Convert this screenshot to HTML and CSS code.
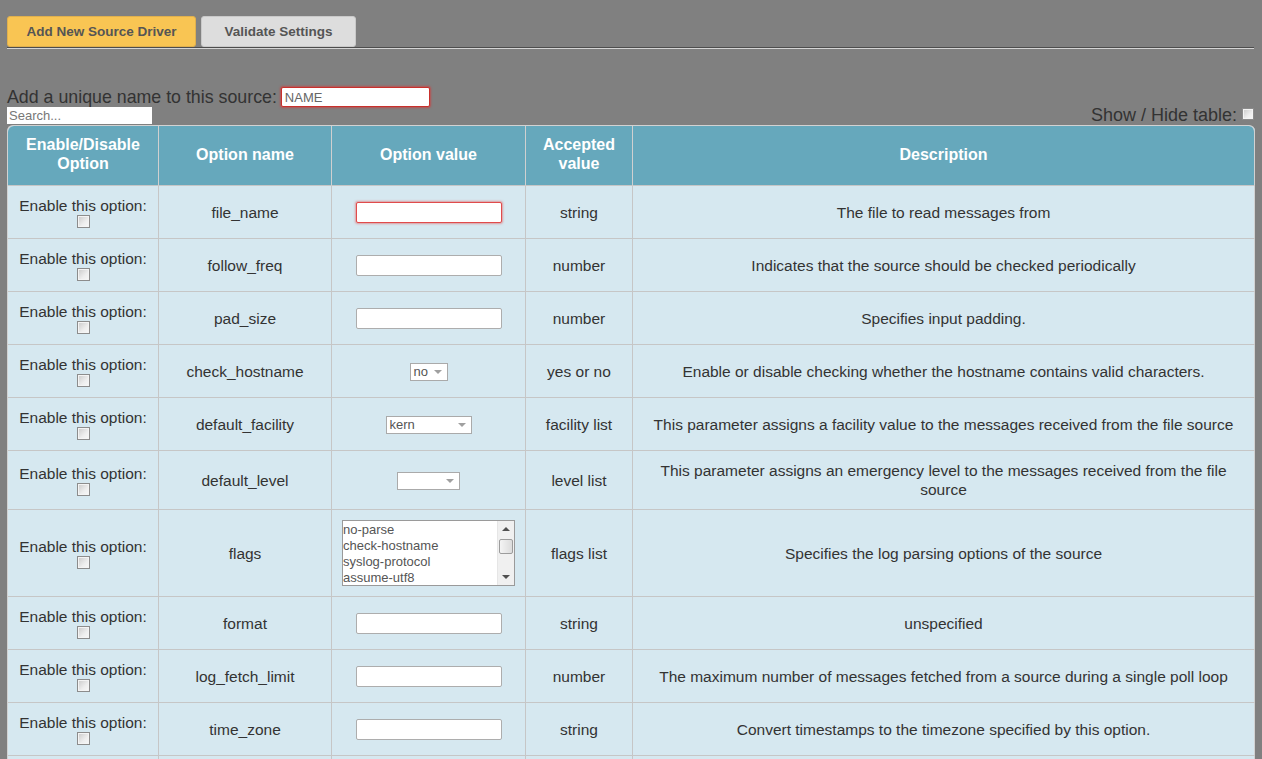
FILE: index.html
```html
<!DOCTYPE html>
<html>
<head>
<meta charset="utf-8">
<title>Source Driver</title>
<link rel="stylesheet" href="styles.css">
</head>
<body>
<div class="tabs">
  <button class="btn btn-primary">Add New Source Driver</button>
  <button class="btn btn-secondary">Validate Settings</button>
</div>
<div class="rule"></div>

<div class="name-row">
  <label class="name-label">Add a unique name to this source:</label>
  <input class="name-input" type="text" value="NAME">
</div>
<div class="tools-row">
  <input class="search" type="text" placeholder="Search...">
  <label class="toggle">Show / Hide table: <input class="chk chk-small" type="checkbox"></label>
</div>

<table class="opts">
  <colgroup>
    <col class="c1"><col class="c2"><col class="c3"><col class="c4"><col class="c5">
  </colgroup>
  <thead>
    <tr>
      <th>Enable/Disable<br>Option</th>
      <th>Option name</th>
      <th>Option value</th>
      <th>Accepted<br>value</th>
      <th>Description</th>
    </tr>
  </thead>
  <tbody>
    <tr>
      <td class="en">Enable this option:<input class="chk" type="checkbox"></td>
      <td>file_name</td>
      <td><input class="txt txt-invalid" type="text"></td>
      <td>string</td>
      <td>The file to read messages from</td>
    </tr>
    <tr>
      <td class="en">Enable this option:<input class="chk" type="checkbox"></td>
      <td>follow_freq</td>
      <td><input class="txt" type="text"></td>
      <td>number</td>
      <td>Indicates that the source should be checked periodically</td>
    </tr>
    <tr>
      <td class="en">Enable this option:<input class="chk" type="checkbox"></td>
      <td>pad_size</td>
      <td><input class="txt" type="text"></td>
      <td>number</td>
      <td>Specifies input padding.</td>
    </tr>
    <tr>
      <td class="en">Enable this option:<input class="chk" type="checkbox"></td>
      <td>check_hostname</td>
      <td><span class="sel sel-yn">no</span></td>
      <td>yes or no</td>
      <td>Enable or disable checking whether the hostname contains valid characters.</td>
    </tr>
    <tr>
      <td class="en">Enable this option:<input class="chk" type="checkbox"></td>
      <td>default_facility</td>
      <td><span class="sel sel-fac">kern</span></td>
      <td>facility list</td>
      <td>This parameter assigns a facility value to the messages received from the file source</td>
    </tr>
    <tr>
      <td class="en">Enable this option:<input class="chk" type="checkbox"></td>
      <td>default_level</td>
      <td><span class="sel sel-lvl"></span></td>
      <td>level list</td>
      <td>This parameter assigns an emergency level to the messages received from the file source</td>
    </tr>
    <tr>
      <td class="en">Enable this option:<input class="chk" type="checkbox"></td>
      <td>flags</td>
      <td>
        <div class="listbox">
          <div class="items">
            <div>no-parse</div>
            <div>check-hostname</div>
            <div>syslog-protocol</div>
            <div>assume-utf8</div>
          </div>
          <div class="sbar">
            <span class="arr arr-up"></span>
            <span class="thumb"></span>
            <span class="arr arr-down"></span>
          </div>
        </div>
      </td>
      <td>flags list</td>
      <td>Specifies the log parsing options of the source</td>
    </tr>
    <tr>
      <td class="en">Enable this option:<input class="chk" type="checkbox"></td>
      <td>format</td>
      <td><input class="txt" type="text"></td>
      <td>string</td>
      <td>unspecified</td>
    </tr>
    <tr>
      <td class="en">Enable this option:<input class="chk" type="checkbox"></td>
      <td>log_fetch_limit</td>
      <td><input class="txt" type="text"></td>
      <td>number</td>
      <td>The maximum number of messages fetched from a source during a single poll loop</td>
    </tr>
    <tr>
      <td class="en">Enable this option:<input class="chk" type="checkbox"></td>
      <td>time_zone</td>
      <td><input class="txt" type="text"></td>
      <td>string</td>
      <td>Convert timestamps to the timezone specified by this option.</td>
    </tr>
    <tr class="tail">
      <td></td>
      <td></td>
      <td></td>
      <td></td>
      <td></td>
    </tr>
  </tbody>
</table>
</body>
</html>
```

FILE: styles.css
```css
html, body {
  margin: 0;
  background: #808080;
}
body {
  padding: 16px 8px 0 7px;
  font-family: "Liberation Sans", Arial, sans-serif;
  font-size: 16px;
  color: #333;
}

.tabs {
  display: flex;
  gap: 5px;
}
.btn {
  height: 31px;
  padding: 0 10px;
  font-family: "Liberation Sans", Arial, sans-serif;
  font-size: 13.5px;
  font-weight: bold;
  color: #555;
  border-radius: 3px;
  cursor: pointer;
}
.btn-primary {
  width: 189px;
  background: #f9c553;
  border: 1px solid #e0b04e;
}
.btn-secondary {
  width: 155px;
  background: #dddddd;
  border: 1px solid #c9c9c9;
}
.rule {
  height: 0;
  border-top: 1px solid #4d4d4d;
  border-bottom: 1px solid #d4d4d4;
}

.name-row {
  display: flex;
  align-items: center;
  margin-top: 38px;
  height: 20px;
}
.name-label {
  font-size: 17.8px;
  color: #333;
}
.name-input {
  box-sizing: border-box;
  width: 149px;
  height: 20px;
  margin-left: 4px;
  padding: 0 3px;
  border: 1px solid #c9302c;
  border-radius: 2px;
  box-shadow: 0 0 2px 1px rgba(220, 50, 50, 0.6);
  background: #fff;
  font-family: "Liberation Sans", Arial, sans-serif;
  font-size: 13px;
  color: #666;
  outline: none;
}

.tools-row {
  display: flex;
  justify-content: space-between;
  align-items: flex-end;
  height: 18px;
}
.search {
  box-sizing: border-box;
  width: 145px;
  height: 17px;
  margin-bottom: 1px;
  border: 0;
  padding: 0 2px;
  background: #fff;
  font-family: "Liberation Sans", Arial, sans-serif;
  font-size: 13px;
  color: #333;
  outline: none;
}
.search::placeholder {
  color: #777;
}
.toggle {
  display: flex;
  align-items: center;
  gap: 5px;
  font-size: 18px;
  color: #333;
  line-height: 18px;
  margin-bottom: 1px;
}

.chk {
  -webkit-appearance: none;
  appearance: none;
  box-sizing: border-box;
  display: block;
  width: 13px;
  height: 13px;
  margin: 0 auto;
  border: 1px solid #8c8c8c;
  background: linear-gradient(135deg, #c9c9c9 0%, #eeeeee 60%, #f8f8f8 100%);
  box-shadow: inset 0 0 0 1px #f4f4f4;
}
.chk-small {
  width: 12px;
  height: 12px;
  margin: 0 0 2px 0;
}

.opts {
  width: 1247px;
  table-layout: fixed;
  border-collapse: separate;
  border-spacing: 0;
  border-top: 1px solid #d2d2d2;
  border-left: 1px solid #d2d2d2;
  border-radius: 6px 6px 0 0;
  background: #d6e8f0;
}
.c1 { width: 151px; }
.c2 { width: 173px; }
.c3 { width: 194px; }
.c4 { width: 107px; }
.c5 { width: 622px; }

.opts th,
.opts td {
  padding: 10px 4px;
  border-right: 1px solid #c6c6c6;
  border-bottom: 1px solid #c6c6c6;
  text-align: center;
  vertical-align: middle;
  line-height: 19px;
}
.opts th {
  padding-top: 9px;
  padding-bottom: 12px;
  background: #66a8bc;
  color: #fff;
  font-size: 16px;
  font-weight: bold;
  border-right-color: #d0d0d0;
}
.opts th:first-child {
  border-top-left-radius: 6px;
}
.opts th:last-child {
  border-top-right-radius: 6px;
  border-right-color: #d2d2d2;
}
.opts td {
  color: #333;
  font-size: 15.5px;
}
.opts td:last-child {
  border-right-color: #d2d2d2;
}
.opts .tail td {
  height: 40px;
}

.txt {
  box-sizing: border-box;
  display: inline-block;
  vertical-align: middle;
  width: 146px;
  height: 21px;
  border: 1px solid #adadad;
  border-radius: 2px;
  background: #fff;
  outline: none;
  padding: 0 3px;
}
.txt-invalid {
  border-color: #e04b4b;
  box-shadow: 0 0 2px 1px rgba(230, 80, 80, 0.5);
}

.sel {
  box-sizing: border-box;
  position: relative;
  display: inline-block;
  vertical-align: middle;
  height: 18px;
  padding: 0 0 0 3px;
  border: 1px solid #aaaaaa;
  background: #fff;
  font-size: 13px;
  line-height: 16px;
  color: #555;
  text-align: left;
}
.sel::after {
  content: "";
  position: absolute;
  right: 5px;
  top: 6px;
  border-left: 4px solid transparent;
  border-right: 4px solid transparent;
  border-top: 4px solid #a0a0a0;
}
.sel-yn { width: 38px; }
.sel-fac { width: 86px; }
.sel-lvl { width: 63px; }

.listbox {
  box-sizing: border-box;
  display: inline-flex;
  vertical-align: top;
  width: 173px;
  height: 66px;
  border: 1px solid #9a9a9a;
  background: #fff;
  text-align: left;
}
.items {
  flex: 1;
  padding-top: 1px;
  font-size: 13px;
  line-height: 16px;
  color: #555;
  overflow: hidden;
}
.sbar {
  position: relative;
  width: 16px;
  background: #f0f0f0;
  border-left: 1px solid #e6e6e6;
}
.arr {
  position: absolute;
  left: 4px;
  width: 0;
  height: 0;
  border-left: 4px solid transparent;
  border-right: 4px solid transparent;
}
.arr-up {
  top: 6px;
  border-bottom: 4px solid #505050;
}
.arr-down {
  bottom: 6px;
  border-top: 4px solid #505050;
}
.thumb {
  position: absolute;
  left: 1px;
  top: 18px;
  width: 14px;
  height: 15px;
  box-sizing: border-box;
  border: 1px solid #9c9c9c;
  border-radius: 2px;
  background: linear-gradient(90deg, #f4f4f4, #dcdcdc);
}
```
